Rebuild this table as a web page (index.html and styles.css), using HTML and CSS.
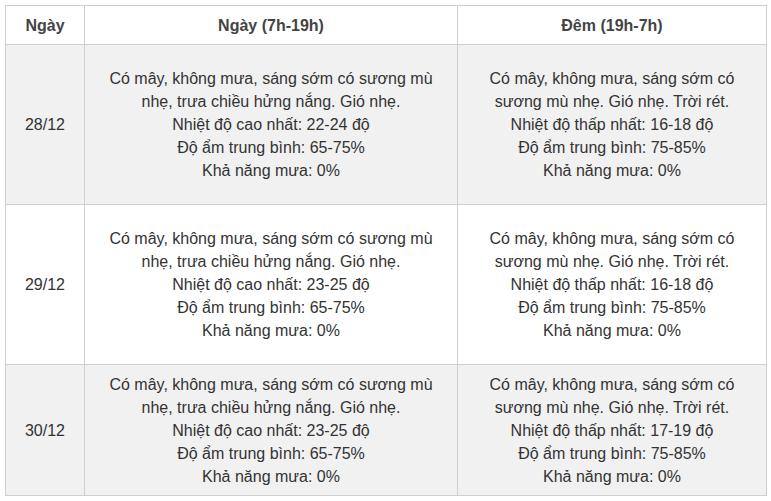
FILE: index.html
```html
<!DOCTYPE html>
<html lang="vi">
<head>
<meta charset="utf-8">
<link rel="stylesheet" href="styles.css">
</head>
<body>
<table class="weather">
  <colgroup>
    <col class="c-date">
    <col class="c-day">
    <col class="c-night">
  </colgroup>
  <thead>
    <tr class="head">
      <th>Ngày</th>
      <th>Ngày (7h-19h)</th>
      <th>Đêm (19h-7h)</th>
    </tr>
  </thead>
  <tbody>
    <tr class="row alt">
      <td>28/12</td>
      <td>Có mây, không mưa, sáng sớm có sương mù nhẹ, trưa chiều hửng nắng. Gió nhẹ.<br>Nhiệt độ cao nhất: 22-24 độ<br>Độ ẩm trung bình: 65-75%<br>Khả năng mưa: 0%</td>
      <td>Có mây, không mưa, sáng sớm có sương mù nhẹ. Gió nhẹ. Trời rét.<br>Nhiệt độ thấp nhất: 16-18 độ<br>Độ ẩm trung bình: 75-85%<br>Khả năng mưa: 0%</td>
    </tr>
    <tr class="row">
      <td>29/12</td>
      <td>Có mây, không mưa, sáng sớm có sương mù nhẹ, trưa chiều hửng nắng. Gió nhẹ.<br>Nhiệt độ cao nhất: 23-25 độ<br>Độ ẩm trung bình: 65-75%<br>Khả năng mưa: 0%</td>
      <td>Có mây, không mưa, sáng sớm có sương mù nhẹ. Gió nhẹ. Trời rét.<br>Nhiệt độ thấp nhất: 16-18 độ<br>Độ ẩm trung bình: 75-85%<br>Khả năng mưa: 0%</td>
    </tr>
    <tr class="row alt last">
      <td>30/12</td>
      <td>Có mây, không mưa, sáng sớm có sương mù nhẹ, trưa chiều hửng nắng. Gió nhẹ.<br>Nhiệt độ cao nhất: 23-25 độ<br>Độ ẩm trung bình: 65-75%<br>Khả năng mưa: 0%</td>
      <td>Có mây, không mưa, sáng sớm có sương mù nhẹ. Gió nhẹ. Trời rét.<br>Nhiệt độ thấp nhất: 17-19 độ<br>Độ ẩm trung bình: 75-85%<br>Khả năng mưa: 0%</td>
    </tr>
  </tbody>
</table>
</body>
</html>
```

FILE: styles.css
```css
html, body {
  margin: 0;
  padding: 0;
  background: #fff;
}
body {
  padding: 5px;
  font-family: "Liberation Sans", Arial, sans-serif;
  font-size: 16px;
  color: #333;
}
.weather {
  border-collapse: collapse;
  table-layout: fixed;
  width: 761px;
}
.c-date { width: 79px; }
.c-day { width: 373px; }
.c-night { width: 309px; }
.weather th,
.weather td {
  border: 1px solid #cfcfcf;
  text-align: center;
  vertical-align: middle;
  padding: 0 12px;
  line-height: 23px;
}
.weather th {
  font-weight: bold;
  color: #444;
  height: 38px;
  background: #fff;
}
.row td {
  height: 159px;
  background: #fff;
}
.row.alt td {
  background: #f1f1f1;
}
.row.last td {
  height: 130px;
}
```
